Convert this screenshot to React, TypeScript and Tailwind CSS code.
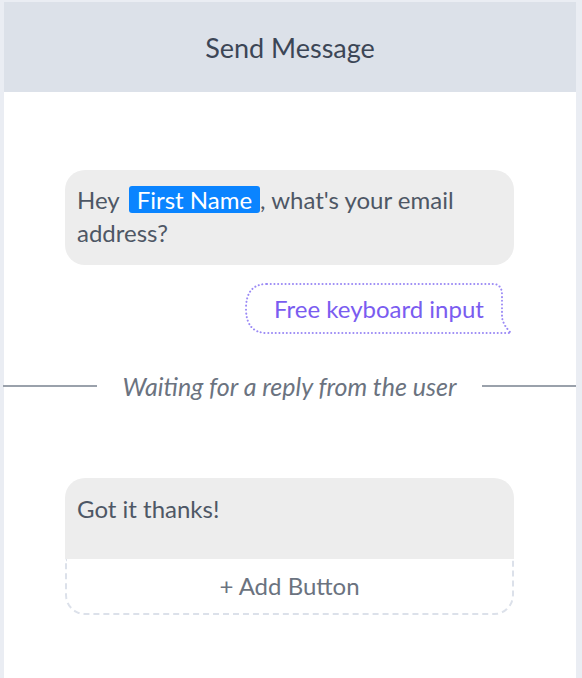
import React from "react";

export default function App() {
  return (
    <div
      className="w-[582px] h-[678px] bg-[#eaedf3] pt-[2px] pl-[4px] pr-[6px] overflow-hidden"
      style={{ fontFamily: "Lato, 'Noto Sans', sans-serif" }}
    >
      <div className="bg-white h-full flex flex-col">
        <div className="h-[90px] bg-[#dce1e9] flex items-center justify-center pt-[2px]">
          <span className="text-[27px] text-[#3c4656]">Send Message</span>
        </div>

        <div className="mt-[78px] ml-[61px] mr-[62px] bg-[#ededed] rounded-[20px] pl-[12px] pr-[16px] pt-[13px] pb-[16px] text-[24px] leading-[33px] text-[#4e5765]">
          Hey
          <span className="inline-block ml-[9px] bg-[#0a84ff] text-white rounded-[3px] px-[8px] leading-[27px]">
            First Name
          </span>
          , what's your email address?
        </div>

        <div className="mt-[18px] mr-[64px] self-end relative w-[267px] h-[51px] flex items-center pl-[29px]">
          <svg
            className="absolute inset-0"
            width="267"
            height="51"
            viewBox="0 0 267 51"
            fill="none"
          >
            <path
              d="M22 1 H248 Q257 1 257 12 V34 Q258 42 266 50 H22 Q1 50 1 25.5 Q1 1 22 1 Z"
              stroke="#9b8af5"
              strokeWidth="2"
              strokeDasharray="0.1 3.6"
              strokeLinecap="round"
            />
          </svg>
          <span className="relative text-[24px] text-[#7a5cf0]">Free keyboard input</span>
        </div>

        <div className="mt-[35px] flex items-center -ml-[1px]">
          <div className="w-[94px] h-[2px] bg-[#9aa1ab]" />
          <span className="flex-1 text-center italic text-[25px] leading-[34px] text-[#6b7380]">
            Waiting for a reply from the user
          </span>
          <div className="w-[94px] h-[2px] bg-[#9aa1ab]" />
        </div>

        <div className="mt-[75px] ml-[61px] mr-[62px] flex flex-col">
          <div className="bg-[#ededed] rounded-t-[20px] h-[81px] pl-[12px] pt-[14px] text-[24px] leading-[33px] text-[#4e5765]">
            Got it thanks!
          </div>
          <div className="h-[56px] border-2 border-t-0 border-dashed border-[#dce1ea] rounded-b-[20px] flex items-center justify-center text-[24px] text-[#6b7380]">
            + Add Button
          </div>
        </div>
      </div>
    </div>
  );
}
